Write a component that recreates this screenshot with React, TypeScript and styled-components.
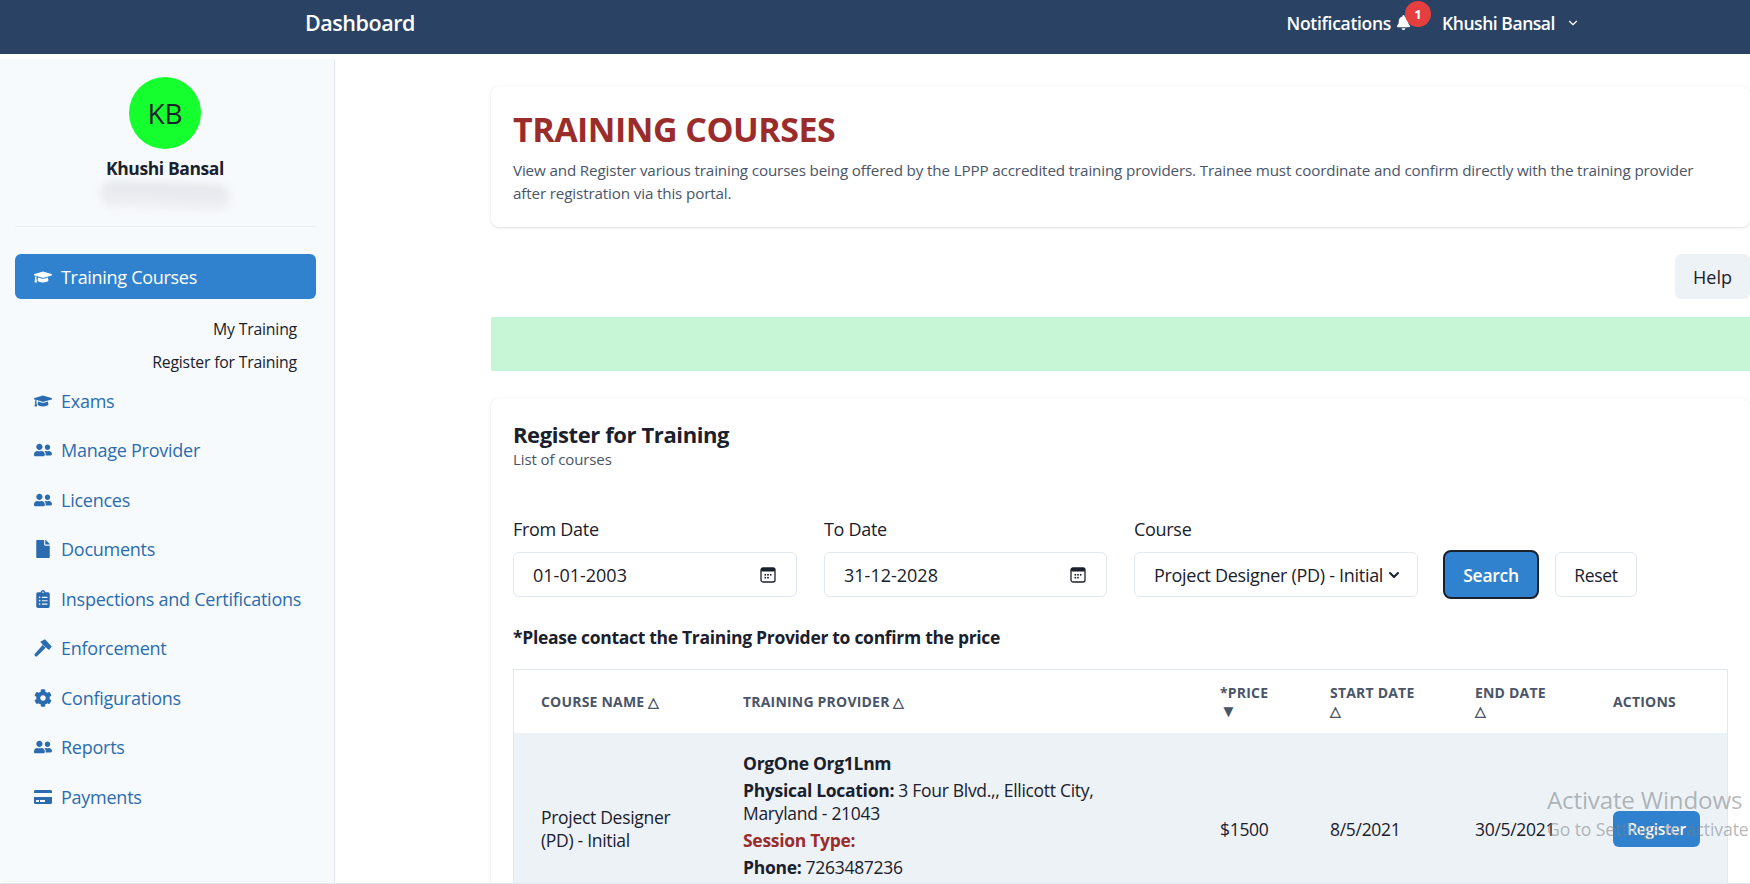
import * as React from "react";
import styled, { createGlobalStyle } from "styled-components";
import {
  FaGraduationCap,
  FaUserFriends,
  FaFile,
  FaClipboardList,
  FaCog,
  FaBell,
  FaCreditCard,
} from "react-icons/fa";
import { FiChevronDown } from "react-icons/fi";

const GlobalStyle = createGlobalStyle`
  html, body {
    margin: 0;
    padding: 0;
    height: 884px;
    overflow: hidden;
    background: #fff;
    font-family: "Open Sans", "Noto Sans", sans-serif;
    color: #1a202c;
  }
  * { box-sizing: border-box; }
`;

const Page = styled.div`
  position: relative;
  width: 1750px;
  height: 884px;
  overflow: hidden;
  display: flex;
  flex-direction: column;
  border-bottom: 1px solid #e2e8f0;
`;

const TopBar = styled.header`
  flex: 0 0 54px;
  background: #2a4365;
  color: #fff;
  display: flex;
  align-items: center;
  padding: 0 170px 9px 305px;
`;

const BarTitle = styled.div`
  font-size: 21.5px;
  font-weight: 600;
  letter-spacing: -0.45px;
  flex: 1;
`;

const BarLabel = styled.span`
  font-size: 17.5px;
  font-weight: 600;
  letter-spacing: -0.3px;
`;

const BarUser = styled(BarLabel)`
  letter-spacing: -0.45px;
`;

const BellWrap = styled.span`
  position: relative;
  display: flex;
  margin: 0 31px 0 5px;
  font-size: 15px;
`;

const Badge = styled.span`
  position: absolute;
  left: 9px;
  top: -14px;
  width: 26px;
  height: 26px;
  border-radius: 50%;
  background: #e53e3e;
  color: #fff;
  font-size: 13px;
  font-weight: 700;
  display: flex;
  align-items: center;
  justify-content: center;
`;

const BarChevron = styled.span`
  display: flex;
  margin-left: 11px;
  font-size: 14px;
`;

const Body = styled.div`
  flex: 1;
  display: flex;
  min-height: 0;
`;

const Sidebar = styled.aside`
  flex: 0 0 335px;
  margin-top: 5px;
  background: #f7fafc;
  border-right: 1px solid #e2e8f0;
  border-bottom-left-radius: 6px;
  padding: 18px 18px 0 15px;
  display: flex;
  flex-direction: column;
`;

const Profile = styled.div`
  display: flex;
  flex-direction: column;
  align-items: center;
  border-bottom: 1px solid #e9eef4;
  height: 150px;
  padding-right: 1px;
`;

const Avatar = styled.div`
  width: 72px;
  height: 72px;
  border-radius: 50%;
  background: #14ff2d;
  color: #1a202c;
  font-size: 28px;
  display: flex;
  align-items: center;
  justify-content: center;
`;

const ProfileName = styled.div`
  margin-top: 7px;
  font-size: 17.5px;
  font-weight: 700;
  letter-spacing: -0.4px;
  line-height: 24px;
`;

const Smudge = styled.div`
  width: 130px;
  height: 27px;
  margin-top: 3px;
  border-radius: 14px;
  background: linear-gradient(#e2e5ea, #f1f3f6);
  filter: blur(4px);
  transform: rotate(2deg);
`;

const Menu = styled.nav`
  margin-top: 27px;
  display: flex;
  flex-direction: column;
`;

const ActiveItem = styled.div`
  height: 45px;
  border-radius: 6px;
  background: #3182ce;
  color: #fff;
  display: flex;
  align-items: center;
  gap: 9px;
  padding-left: 19px;
  font-size: 18px;
  font-weight: 500;
  letter-spacing: -0.3px;
`;

const SubList = styled.div`
  margin: 16px 0 0;
  display: flex;
  flex-direction: column;
  gap: 5px;
`;

const SubItem = styled.div`
  height: 28px;
  display: flex;
  align-items: center;
  justify-content: flex-end;
  padding-right: 19px;
  font-size: 15.8px;
  letter-spacing: -0.2px;
  color: #1a202c;
`;

const MenuItem = styled.div`
  height: 49.5px;
  display: flex;
  align-items: center;
  gap: 9px;
  padding-left: 19px;
  font-size: 18px;
  font-weight: 500;
  letter-spacing: -0.25px;
  color: #2b6cb0;
  white-space: nowrap;
`;

const MenuIcon = styled.span`
  width: 18px;
  display: flex;
  justify-content: center;
  font-size: 18px;
  flex: none;
`;

const Main = styled.main`
  flex: 1;
  min-width: 0;
  padding: 32px 0 0 156px;
  display: flex;
  flex-direction: column;
  overflow: hidden;
`;

const Card = styled.section`
  flex: none;
  background: #fff;
  border-radius: 8px;
  box-shadow: 0 1px 3px rgba(0, 0, 0, 0.12), 0 0 1px rgba(0, 0, 0, 0.05);
  padding: 22px;
`;

const PageTitle = styled.h1`
  margin: 0;
  font-size: 34px;
  line-height: 42px;
  font-weight: 700;
  color: #9b2c2c;
  letter-spacing: -0.5px;
`;

const Lead = styled.p`
  margin: 9px 0 0;
  font-size: 15.2px;
  line-height: 23px;
  letter-spacing: -0.14px;
  color: #4a5568;
`;

const HelpRow = styled.div`
  flex: none;
  display: flex;
  justify-content: flex-end;
  margin-top: 27px;
`;

const HelpButton = styled.div`
  width: 75px;
  height: 45px;
  border-radius: 6px;
  background: #edf2f7;
  display: flex;
  align-items: center;
  justify-content: center;
  font-size: 18px;
  font-weight: 500;
`;

const Notice = styled.div`
  flex: none;
  height: 54px;
  margin-top: 18px;
  background: #c6f6d5;
`;

const RegisterCard = styled(Card)`
  margin-top: 27px;
`;

const SectionTitle = styled.h2`
  margin: 0 0 1px;
  font-size: 22px;
  line-height: 28px;
  font-weight: 700;
  letter-spacing: -0.4px;
`;

const SectionSub = styled.div`
  font-size: 15px;
  line-height: 20px;
  color: #4a5568;
  letter-spacing: -0.1px;
`;

const Filters = styled.div`
  display: flex;
  align-items: flex-end;
  margin-top: 48px;
`;

const Field = styled.div<{ $w: number }>`
  width: ${({ $w }) => $w}px;
  margin-right: 27px;
`;

const FieldLabel = styled.div`
  font-size: 18px;
  line-height: 24px;
  font-weight: 500;
  letter-spacing: -0.3px;
  margin-bottom: 11px;
`;

const FieldBox = styled.div`
  height: 45px;
  border: 1px solid #e2e8f0;
  border-radius: 6px;
  display: flex;
  align-items: center;
  justify-content: space-between;
  padding: 0 20px 0 19px;
  font-size: 18px;
  letter-spacing: 0;
  white-space: nowrap;
`;

const SelectBox = styled(FieldBox)`
  padding: 0 15px 0 19px;
  letter-spacing: -0.3px;
`;

const SearchButton = styled.div`
  width: 96px;
  height: 49px;
  margin: 0 16px -2px -2px;
  border: 2px solid #1a202c;
  border-radius: 8px;
  background: #3182ce;
  color: #fff;
  display: flex;
  align-items: center;
  justify-content: center;
  font-size: 17.5px;
  font-weight: 600;
  letter-spacing: -0.3px;
`;

const ResetButton = styled.div`
  width: 82px;
  height: 45px;
  border: 1px solid #e2e8f0;
  border-radius: 6px;
  display: flex;
  align-items: center;
  justify-content: center;
  font-size: 17.5px;
  font-weight: 500;
  letter-spacing: -0.3px;
`;

const PriceNote = styled.div`
  margin-top: 29px;
  font-size: 17.5px;
  line-height: 22px;
  font-weight: 700;
  letter-spacing: -0.3px;
`;

const TableWrap = styled.div`
  margin-top: 21px;
  border: 1px solid #e2e8f0;
  border-bottom: 0;
`;

const Table = styled.table`
  width: 100%;
  table-layout: fixed;
  border-collapse: collapse;
`;

const Th = styled.th`
  height: 63px;
  padding: 1px 27px 0;
  text-align: left;
  vertical-align: middle;
  font-size: 14px;
  line-height: 18px;
  font-weight: 700;
  letter-spacing: 0.2px;
  text-transform: uppercase;
  color: #4a5568;
`;

const SortedMark = styled.span`
  font-size: 17px;
  line-height: 18px;
`;

const Td = styled.td`
  height: 192px;
  background: #edf2f7;
  padding: 0 27px;
  font-size: 17.5px;
  line-height: 23px;
  letter-spacing: -0.3px;
  vertical-align: middle;
`;

const ProviderCell = styled(Td)`
  vertical-align: top;
  padding-top: 19px;
`;

const ProviderLine = styled.div`
  margin-bottom: 4px;
`;

const Strong = styled.b`
  font-weight: 700;
`;

const SessionLabel = styled.b`
  font-weight: 700;
  color: #9b2c2c;
`;

const RegisterButton = styled.div`
  width: 87px;
  height: 36px;
  border-radius: 6px;
  background: #3182ce;
  color: #fff;
  display: flex;
  align-items: center;
  justify-content: center;
  font-size: 15.5px;
  font-weight: 600;
  letter-spacing: -0.3px;
`;

const Watermark = styled.div`
  position: absolute;
  left: 1547px;
  top: 783px;
  white-space: nowrap;
  color: rgba(120, 125, 130, 0.55);
  pointer-events: none;
`;

const WatermarkTitle = styled.div`
  font-size: 24.2px;
  line-height: 34px;
  letter-spacing: -0.2px;
`;

const WatermarkSub = styled.div`
  font-size: 17.6px;
  line-height: 24px;
  letter-spacing: -0.1px;
`;

const CalendarIcon = () => (
  <svg width="16" height="16" viewBox="0 0 16 16" fill="none">
    <rect x="1" y="1" width="14" height="14" rx="2" stroke="#1a202c" strokeWidth="1.3" />
    <rect x="1" y="1" width="14" height="3.6" rx="1.5" fill="#1a202c" />
    <rect x="4.5" y="7" width="1.6" height="1.6" fill="#1a202c" />
    <rect x="7.2" y="7" width="1.6" height="1.6" fill="#1a202c" />
    <rect x="9.9" y="7" width="1.6" height="1.6" fill="#1a202c" />
    <rect x="4.5" y="9.9" width="1.6" height="1.6" fill="#1a202c" />
    <rect x="7.2" y="9.9" width="1.6" height="1.6" fill="#1a202c" />
  </svg>
);

const HammerIcon = () => (
  <svg width="18" height="18" viewBox="0 0 18 18" fill="currentColor">
    <path d="M6.3 2.7 11 .3 17.7 7.6 15 11 11 7.7 8.3 5.2Z" />
    <path d="M8.6 6 11.6 8.8 3 17.3Q2.2 18 1.4 17.2L.7 16.5Q0 15.7.8 14.9Z" />
  </svg>
);

const menu: [React.ReactNode, string][] = [
  [<FaGraduationCap />, "Exams"],
  [<FaUserFriends />, "Manage Provider"],
  [<FaUserFriends />, "Licences"],
  [<FaFile />, "Documents"],
  [<FaClipboardList />, "Inspections and Certifications"],
  [<HammerIcon />, "Enforcement"],
  [<FaCog />, "Configurations"],
  [<FaUserFriends />, "Reports"],
  [<FaCreditCard />, "Payments"],
];

export default function App() {
  return (
    <Page>
      <GlobalStyle />
      <TopBar>
        <BarTitle>Dashboard</BarTitle>
        <BarLabel>Notifications</BarLabel>
        <BellWrap>
          <FaBell />
          <Badge>1</Badge>
        </BellWrap>
        <BarUser>Khushi Bansal</BarUser>
        <BarChevron>
          <FiChevronDown />
        </BarChevron>
      </TopBar>
      <Body>
        <Sidebar>
          <Profile>
            <Avatar>KB</Avatar>
            <ProfileName>Khushi Bansal</ProfileName>
            <Smudge />
          </Profile>
          <Menu>
            <ActiveItem>
              <MenuIcon>
                <FaGraduationCap />
              </MenuIcon>
              Training Courses
            </ActiveItem>
            <SubList>
              <SubItem>My Training</SubItem>
              <SubItem>Register for Training</SubItem>
            </SubList>
            {menu.map(([icon, label]) => (
              <MenuItem key={label}>
                <MenuIcon>{icon}</MenuIcon>
                {label}
              </MenuItem>
            ))}
          </Menu>
        </Sidebar>
        <Main>
          <Card>
            <PageTitle>TRAINING COURSES</PageTitle>
            <Lead>
              View and Register various training courses being offered by the LPPP accredited
              training providers. Trainee must coordinate and confirm directly with the training
              provider after registration via this portal.
            </Lead>
          </Card>
          <HelpRow>
            <HelpButton>Help</HelpButton>
          </HelpRow>
          <Notice />
          <RegisterCard>
            <SectionTitle>Register for Training</SectionTitle>
            <SectionSub>List of courses</SectionSub>
            <Filters>
              <Field $w={284}>
                <FieldLabel>From Date</FieldLabel>
                <FieldBox>
                  01-01-2003
                  <CalendarIcon />
                </FieldBox>
              </Field>
              <Field $w={283}>
                <FieldLabel>To Date</FieldLabel>
                <FieldBox>
                  31-12-2028
                  <CalendarIcon />
                </FieldBox>
              </Field>
              <Field $w={284}>
                <FieldLabel>Course</FieldLabel>
                <SelectBox>
                  Project Designer (PD) - Initial
                  <FiChevronDown strokeWidth={3} size={16} />
                </SelectBox>
              </Field>
              <SearchButton>Search</SearchButton>
              <ResetButton>Reset</ResetButton>
            </Filters>
            <PriceNote>*Please contact the Training Provider to confirm the price</PriceNote>
            <TableWrap>
              <Table>
                <colgroup>
                  <col style={{ width: 202 }} />
                  <col style={{ width: 477 }} />
                  <col style={{ width: 110 }} />
                  <col style={{ width: 145 }} />
                  <col style={{ width: 138 }} />
                  <col />
                </colgroup>
                <thead>
                  <tr>
                    <Th>Course Name △</Th>
                    <Th>Training Provider △</Th>
                    <Th>
                      *Price <SortedMark>▼</SortedMark>
                    </Th>
                    <Th>Start Date △</Th>
                    <Th>End Date △</Th>
                    <Th>Actions</Th>
                  </tr>
                </thead>
                <tbody>
                  <tr>
                    <Td>Project Designer (PD) - Initial</Td>
                    <ProviderCell>
                      <ProviderLine>
                        <Strong>OrgOne Org1Lnm</Strong>
                      </ProviderLine>
                      <ProviderLine>
                        <Strong>Physical Location:</Strong> 3 Four Blvd.,, Ellicott City, Maryland -
                        21043
                      </ProviderLine>
                      <ProviderLine>
                        <SessionLabel>Session Type:</SessionLabel>
                      </ProviderLine>
                      <ProviderLine>
                        <Strong>Phone:</Strong> 7263487236
                      </ProviderLine>
                    </ProviderCell>
                    <Td>$1500</Td>
                    <Td>8/5/2021</Td>
                    <Td>30/5/2021</Td>
                    <Td>
                      <RegisterButton>Register</RegisterButton>
                    </Td>
                  </tr>
                </tbody>
              </Table>
            </TableWrap>
          </RegisterCard>
        </Main>
      </Body>
      <Watermark>
        <WatermarkTitle>Activate Windows</WatermarkTitle>
        <WatermarkSub>Go to Settings to activate</WatermarkSub>
      </Watermark>
    </Page>
  );
}
